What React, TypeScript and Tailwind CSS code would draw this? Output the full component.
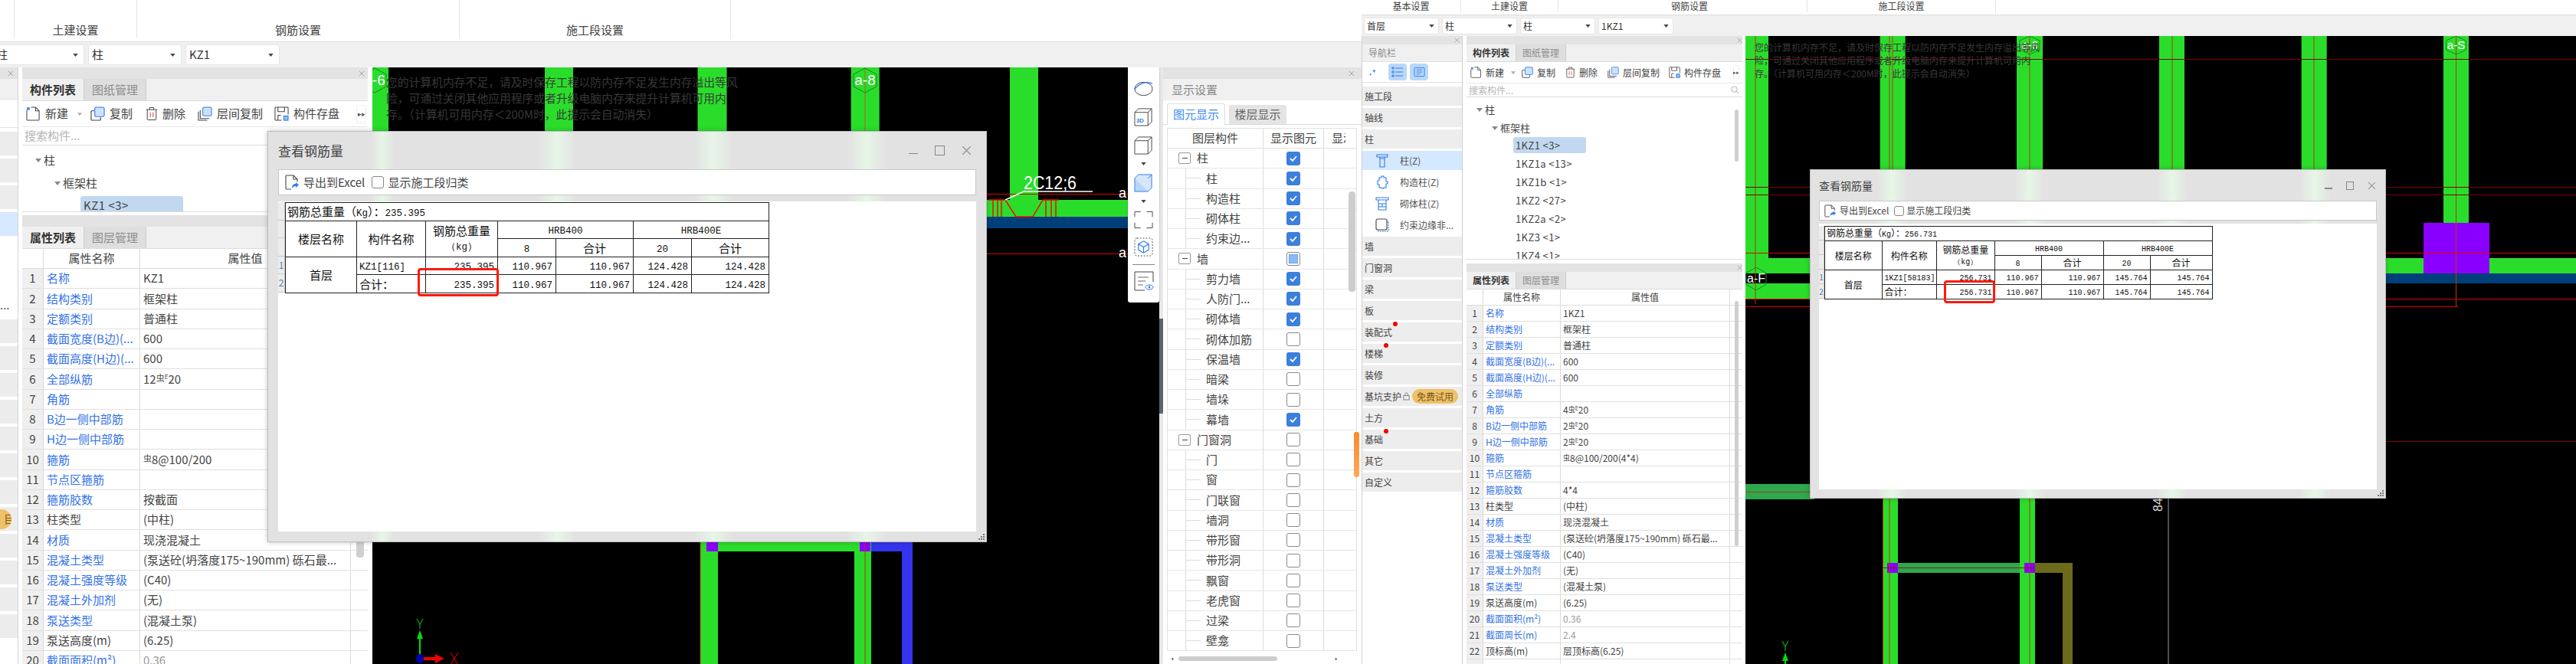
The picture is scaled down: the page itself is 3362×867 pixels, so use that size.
import type { ReactNode } from 'react';

type Row = [string, string, number?];

const cjk = "font-['Noto_Sans_CJK_SC',sans-serif]";

const leftRows: Row[] = [
  ['名称', 'KZ1', 1], ['结构类别', '框架柱', 1], ['定额类别', '普通柱', 1],
  ['截面宽度(B边)(...', '600', 1], ['截面高度(H边)(...', '600', 1], ['全部纵筋', '12§E20', 1],
  ['角筋', '', 1], ['B边一侧中部筋', '', 1], ['H边一侧中部筋', '', 1],
  ['箍筋', '§8@100/200', 1], ['节点区箍筋', '', 1], ['箍筋胶数', '按截面', 1],
  ['柱类型', '(中柱)'], ['材质', '现浇混凝土', 1], ['混凝土类型', '(泵送砼(坍落度175~190mm) 砾石最...', 1],
  ['混凝土强度等级', '(C40)', 1], ['混凝土外加剂', '(无)', 1], ['泵送类型', '(混凝土泵)', 1],
  ['泵送高度(m)', '(6.25)'], ['截面面积(m²)', '0.36', 2],
];

const rightRows: Row[] = [
  ['名称', '1KZ1', 1], ['结构类别', '框架柱', 1], ['定额类别', '普通柱', 1],
  ['截面宽度(B边)(...', '600', 1], ['截面高度(H边)(...', '600', 1], ['全部纵筋', '', 1],
  ['角筋', '4§E20', 1], ['B边一侧中部筋', '2§E20', 1], ['H边一侧中部筋', '2§E20', 1],
  ['箍筋', '§8@100/200(4*4)', 1], ['节点区箍筋', '', 1], ['箍筋胶数', '4*4', 1],
  ['柱类型', '(中柱)'], ['材质', '现浇混凝土', 1], ['混凝土类型', '(泵送砼(坍落度175~190mm) 砾石最...', 1],
  ['混凝土强度等级', '(C40)', 1], ['混凝土外加剂', '(无)', 1], ['泵送类型', '(混凝土泵)', 1],
  ['泵送高度(m)', '(6.25)'], ['截面面积(m²)', '0.36', 2], ['截面周长(m)', '2.4', 2],
  ['顶标高(m)', '层顶标高(6.25)'], ['', ''],
];

const layerGroups: { name: string; items: [string, boolean][]; state: 'on' | 'mixed' | 'off' }[] = [
  { name: '柱', state: 'on', items: [['柱', true], ['构造柱', true], ['砌体柱', true], ['约束边...', true]] },
  { name: '墙', state: 'mixed', items: [['剪力墙', true], ['人防门...', true], ['砌体墙', true], ['砌体加筋', false], ['保温墙', true], ['暗梁', false], ['墙垛', false], ['幕墙', true]] },
  { name: '门窗洞', state: 'off', items: [['门', false], ['窗', false], ['门联窗', false], ['墙洞', false], ['带形窗', false], ['带形洞', false], ['飘窗', false], ['老虎窗', false], ['过梁', false], ['壁龛', false]] },
];

function Close({ className }: { className: string }) {
  return (
    <svg viewBox="0 0 10 10" className={className} fill="none" stroke="#9a9a9a" strokeWidth="1.1">
      <path d="M1 1l8 8M9 1l-8 8" />
    </svg>
  );
}

function Caret({ className = 'w-[8px] h-[5px]', color = '#666' }: { className?: string; color?: string }) {
  return (
    <svg viewBox="0 0 8 5" className={`shrink-0 ${className}`}>
      <path d="M0 0h8L4 5z" fill={color} />
    </svg>
  );
}

function Combo({ text, className }: { text: string; className: string }) {
  return (
    <div className={`flex items-center justify-between bg-white rounded-[3px] border border-[#e6e6e6] text-[#333] ${className}`}>
      <span className="overflow-hidden whitespace-nowrap">{text}</span>
      <Caret className="w-[7px] h-[4px] mr-[1px]" color="#444" />
    </div>
  );
}

function NewIcon({ className }: { className: string }) {
  return (
    <svg viewBox="0 0 20 20" className={`shrink-0 ${className}`} fill="none" stroke="#444" strokeWidth="1.1">
      <path d="M1 5v13a1 1 0 001 1h15a1 1 0 001-1V6l-5-5H7" />
      <path d="M13 1v5h5" />
      <path d="M1 1h4v4H1z" fill="#4a8ff0" stroke="none" />
    </svg>
  );
}

function CopyIcon({ className }: { className: string }) {
  return (
    <svg viewBox="0 0 20 20" className={`shrink-0 ${className}`} fill="none" strokeWidth="1.2">
      <path d="M5 6H2a1 1 0 00-1 1v11a1 1 0 001 1h11a1 1 0 001-1v-3" stroke="#444" />
      <rect x="6" y="1" width="13" height="13" rx="2" fill="#cfe2fb" stroke="#2f7de8" />
    </svg>
  );
}

function TrashIcon({ className }: { className: string }) {
  return (
    <svg viewBox="0 0 18 20" className={`shrink-0 ${className}`} fill="none" stroke="#444" strokeWidth="1.1">
      <path d="M1 4h16M6 4V1h6v3M2.5 4v14a1 1 0 001 1h11a1 1 0 001-1V4" />
      <path d="M7 8v7M11 8v7" stroke="#e04040" />
    </svg>
  );
}

function LayerCopyIcon({ className }: { className: string }) {
  return (
    <svg viewBox="0 0 20 20" className={`shrink-0 ${className}`} fill="none" strokeWidth="1.1">
      <path d="M1 7v12h12M3.5 5v11.5H16" stroke="#444" />
      <rect x="7" y="1" width="12" height="12" rx="2" fill="#cfe2fb" stroke="#2f7de8" />
    </svg>
  );
}

function SaveIcon({ className }: { className: string }) {
  return (
    <svg viewBox="0 0 20 20" className={`shrink-0 ${className}`} fill="none" stroke="#444" strokeWidth="1.1">
      <path d="M10 19H2a1 1 0 01-1-1V2a1 1 0 011-1h16a1 1 0 011 1v9" />
      <path d="M5 1v6h9V1M5 19v-7h4" />
      <rect x="13" y="13" width="6" height="6" fill="#8bbcf5" stroke="#2f7de8" />
    </svg>
  );
}

function ExportIcon({ className }: { className: string }) {
  return (
    <svg viewBox="0 0 18 20" className={`shrink-0 ${className}`} fill="none" strokeWidth="1.1">
      <path d="M8 19H2a1 1 0 01-1-1V2a1 1 0 011-1h9l5 5v3" stroke="#444" />
      <path d="M11 1v5h5" stroke="#444" />
      <path d="M9 18c0-4 2-6 5-6v-2l4 3.5-4 3.5v-2c-2 0-4 1-5 3z" fill="#2f7de8" />
    </svg>
  );
}

function Val({ text, big }: { text: string; big: boolean }) {
  if (!text.includes('§')) return <>{text}</>;
  const [a, b] = text.split('§');
  const hasE = b.startsWith('E');
  return (
    <>
      {a}
      <span className={`relative ${big ? 'text-[11px] -top-[3px]' : 'text-[9px] -top-[2px]'}`}>虫</span>
      {hasE && <span className={`relative ${big ? 'text-[8px] -top-[6px]' : 'text-[7px] -top-[4px]'}`}>E</span>}
      {hasE ? b.slice(1) : b}
    </>
  );
}

function PanelStrip({ big }: { big: boolean }) {
  return (
    <div className={`flex items-center justify-end shrink-0 bg-[#e3e3e3] ${big ? 'h-[15px] pr-[4px]' : 'h-[11px] pr-0'}`}>
      <Close className={big ? 'w-[8px] h-[8px]' : 'w-[7px] h-[7px]'} />
    </div>
  );
}

function TabRow({ big, a, b }: { big: boolean; a: string; b: string }) {
  const tab = big ? 'w-[81px] h-[28px] text-[15px]' : 'w-[65px] h-[22px] text-[12px]';
  return (
    <div className="flex shrink-0 bg-[#f0f0f0] border-b border-[#dcdcdc]">
      <div className={`${tab} flex items-center justify-center font-bold text-[#333] border-r border-[#d0d0d0]`}>{a}</div>
      <div className={`${tab} flex items-center justify-center bg-[#dedede] text-[#8d8d8d] border-r border-[#cfcfcf]`}>{b}</div>
    </div>
  );
}

function ToolButtons({ big }: { big: boolean }) {
  const icon = big ? 'w-[19px] h-[19px]' : 'w-[15px] h-[15px]';
  const gap = big ? 'gap-[6px]' : 'gap-[5px]';
  return (
    <div className={`flex items-center shrink-0 bg-white text-[#444] border-b border-[#e8e8e8] ${big ? 'h-[34px] pl-[5px] text-[15px]' : 'h-[28px] pl-[5px] text-[12px]'}`}>
      <div className={`flex items-center ${gap} ${big ? 'w-[84px]' : 'w-[67px]'}`}>
        <NewIcon className={icon} />
        <span>新建</span>
        <span className={big ? 'ml-[6px]' : 'ml-[4px]'}><Caret className="w-[6px] h-[4px]" color="#aaa" /></span>
      </div>
      <div className={`flex items-center ${gap} ${big ? 'w-[72px]' : 'w-[57px]'}`}>
        <CopyIcon className={icon} />
        <span>复制</span>
      </div>
      <div className={`flex items-center ${gap} ${big ? 'w-[68px]' : 'w-[55px]'}`}>
        <TrashIcon className={big ? 'w-[16px] h-[19px]' : 'w-[13px] h-[15px]'} />
        <span>删除</span>
      </div>
      <div className={`flex items-center ${gap} ${big ? 'w-[100px]' : 'w-[80px]'}`}>
        <LayerCopyIcon className={icon} />
        <span>层间复制</span>
      </div>
      <div className={`flex items-center ${gap} ${big ? 'w-[107px]' : 'w-[84px]'}`}>
        <SaveIcon className={icon} />
        <span>构件存盘</span>
      </div>
      <div className={`flex items-center justify-center rounded-[3px] border border-[#eee] text-[#555] ${big ? 'w-[13px] h-[24px] text-[9px]' : 'w-[8px] h-[20px] text-[7px]'}`}>▸▸</div>
    </div>
  );
}

function PropTable({ big, rows }: { big: boolean; rows: Row[] }) {
  const h = big ? 'h-[26.25px]' : 'h-[21px]';
  const c1 = big ? 'w-[28px]' : 'w-[22px]';
  const c2 = big ? 'w-[126px]' : 'w-[101px]';
  const c3 = big ? 'w-[275px]' : 'w-[221px]';
  return (
    <div className={big ? 'text-[15px]' : 'text-[12px]'}>
      <div className={`flex bg-white border-b border-[#dcdcdc] text-[#444] ${big ? 'h-[26px]' : 'h-[21px]'}`}>
        <div className={`${c1} border-r border-[#dcdcdc]`} />
        <div className={`${c2} flex items-center justify-center border-r border-[#dcdcdc]`}>属性名称</div>
        <div className={`${c3} flex items-center justify-center border-r border-[#dcdcdc]`}>属性值</div>
      </div>
      {rows.map((r, i) => (
        <div key={i} className={`flex border-b border-[#e0e0e0] ${h}`}>
          <div className={`${c1} shrink-0 flex items-center justify-center bg-[#efefef] border-r border-[#d8d8d8] text-[#444]`}>{i + 1}</div>
          <div className={`${c2} shrink-0 flex items-center border-r border-[#dcdcdc] whitespace-nowrap overflow-hidden ${big ? 'pl-[4px]' : 'pl-[3px]'} ${r[2] ? 'text-[#3372e6]' : 'text-[#444]'}`}>{r[0]}</div>
          <div className={`${c3} shrink-0 flex items-center border-r border-[#dcdcdc] whitespace-nowrap overflow-hidden ${big ? 'pl-[4px]' : 'pl-[3px]'} ${r[2] === 2 ? 'text-[#9a9a9a]' : 'text-[#444]'}`}>
            <span><Val text={r[1]} big={big} /></span>
          </div>
        </div>
      ))}
    </div>
  );
}

function ComponentPanel({ big, items, rows }: { big: boolean; items: string[]; rows: Row[] }) {
  return (
    <div className={`flex flex-col shrink-0 overflow-hidden bg-white ${big ? 'w-[451px]' : 'w-[360px]'}`}>
      <PanelStrip big={big} />
      <TabRow big={big} a="构件列表" b="图纸管理" />
      <ToolButtons big={big} />
      <div className={`flex items-center justify-between shrink-0 bg-white text-[#b5b5b5] border-b border-[#dcdcdc] pl-[3px] ${big ? 'h-[24px] text-[15px]' : 'h-[18px] text-[12px]'}`}>
        <span>搜索构件...</span>
        {!big && (
          <svg viewBox="0 0 12 12" className="w-[11px] h-[11px] mr-[4px]" fill="none" stroke="#aaa"><circle cx="5" cy="5" r="4" /><path d="M8 8l3 3" /></svg>
        )}
      </div>
      <div className={`relative shrink-0 bg-white overflow-hidden border-b border-[#dcdcdc] ${big ? 'h-[87px] pt-[4px] text-[15px]' : 'h-[212px] pt-[4px] text-[13px]'} text-[#444]`}>
        <div className={`flex items-center gap-[3px] ${big ? 'h-[30px] pl-[17px]' : 'h-[24px] pl-[13px]'}`}>
          <Caret color="#888" />柱
        </div>
        <div className={`flex items-center gap-[3px] ${big ? 'h-[30px] pl-[42px]' : 'h-[24px] pl-[33px]'}`}>
          <Caret color="#888" />框架柱
        </div>
        {items.map((t, i) => (
          <div key={t} className={`flex items-center ${big ? 'h-[24px] ml-[76px] mt-[2px] w-[134px] pl-[4px] tracking-[0.5px]' : 'h-[21px] mb-[3px] ml-[61px] pl-[3px] w-[95px] tracking-[0.4px]'} ${i === 0 ? 'bg-[#c1d8f0] rounded-[3px]' : ''}`}>
            {t}
          </div>
        ))}
        {!big && <div className="absolute right-[5px] top-[16px] w-[5px] h-[68px] rounded-[3px] bg-[#cfcfcf]" />}
      </div>
      <div className={`shrink-0 ${big ? 'h-[4px]' : 'h-[5px]'}`} />
      <PanelStrip big={big} />
      <TabRow big={big} a="属性列表" b="图层管理" />
      <div className="relative flex-1 min-h-0 overflow-hidden">
        <PropTable big={big} rows={rows} />
        <div className={`absolute rounded-[4px] bg-[#cfcfcf] ${big ? 'right-[5px] top-[18px] w-[10px] h-[385px]' : 'right-[5px] top-[15px] w-[5px] h-[320px]'}`} />
      </div>
    </div>
  );
}

function NavIcon({ kind }: { kind: number }) {
  const common = { className: 'w-[18px] h-[18px]', fill: 'none', stroke: '#2f7de8', strokeWidth: 1.1, viewBox: '0 0 18 18' };
  if (kind === 0) return <svg {...common}><path d="M2 1h14v3H2zM5 4l1 2h6l1-2M6 6v11h6V6" /></svg>;
  if (kind === 1) return <svg {...common}><path d="M5 3h3V1h3v2h3v5h2v3h-2v5h-3v1H8v-1H5v-4H3V7h2z" /></svg>;
  if (kind === 2) return <svg {...common}><path d="M1 1h16v3H1zM4 4v13h10V4M4 9h10M4 13h10M9 9v4" /></svg>;
  return <svg {...common}><rect x="1" y="1" width="14" height="14" rx="2" stroke="#444" /><path d="M15 4h2v13H4v-2" strokeDasharray="2 1" /></svg>;
}

function RightNav() {
  const top = ['施工段', '轴线', '柱'];
  const sub = ['柱(Z)', '构造柱(Z)', '砌体柱(Z)', '约束边缘非...'];
  const bottom: [string, boolean][] = [['墙', false], ['门窗洞', false], ['梁', false], ['板', false], ['装配式', true], ['楼梯', true], ['装修', false]];
  const last: [string, boolean][] = [['土方', false], ['基础', true], ['其它', false], ['自定义', false]];
  const Band = ({ t, dot }: { t: string; dot?: boolean }) => (
    <div className="relative flex items-center shrink-0 h-[25px] mb-[3px] pl-[3px] bg-[#ededed] text-[12px] text-[#444]">
      {t}
      {dot && <span className={`absolute top-[-1px] w-[6px] h-[6px] rounded-full bg-[#f00000] ${t.length > 2 ? 'left-[40px]' : 'left-[28px]'}`} />}
    </div>
  );
  return (
    <div className="flex flex-col w-[132px] shrink-0 bg-white border-l border-[#cfcfcf] border-r">
      <div className="flex items-center justify-end shrink-0 h-[11px] bg-[#e3e3e3] pr-[3px]"><Close className="w-[7px] h-[7px]" /></div>
      <div className="flex items-center shrink-0 h-[23px] pl-[8px] text-[12px] text-[#8a8a8a] bg-[#f0f0f0] border-b border-[#e2e2e2]">导航栏</div>
      <div className="flex items-center shrink-0 h-[27px] gap-[4px] pl-[8px] border-b border-[#e2e2e2]">
        <svg viewBox="0 0 12 12" className="w-[11px] h-[11px] mr-[11px]" fill="#2f7de8"><path d="M8 1l.7 2.3L11 4l-2.3.7L8 7l-.7-2.3L5 4l2.3-.7zM3 7l.5 1.5L5 9l-1.5.5L3 11l-.5-1.5L1 9l1.5-.5z" /></svg>
        <div className="flex items-center justify-center w-[24px] h-[22px] rounded-[4px] bg-[#b9d8f8]">
          <svg viewBox="0 0 16 14" className="w-[16px] h-[14px]" fill="none" stroke="#2f7de8"><path d="M5 2h10M5 7h10M5 12h10" /><rect x="1" y="1" width="2" height="2" /><rect x="1" y="6" width="2" height="2" /><rect x="1" y="11" width="2" height="2" /></svg>
        </div>
        <div className="flex items-center justify-center w-[24px] h-[22px] rounded-[4px] bg-[#b9d8f8]">
          <svg viewBox="0 0 16 14" className="w-[15px] h-[14px]" fill="none" stroke="#2f7de8"><rect x="1" y="1" width="14" height="12" rx="1" /><path d="M4 4h8M4 7h8M4 10h5" /></svg>
        </div>
      </div>
      <div className="shrink-0 h-[5px]" />
      {top.map(t => <Band key={t} t={t} />)}
      {sub.map((t, i) => (
        <div key={t} className={`flex items-center shrink-0 h-[25px] mb-[3px] pl-[17px] gap-[14px] text-[12px] text-[#555] ${i === 0 ? 'bg-[#d4e8ff]' : ''}`}>
          <NavIcon kind={i} />
          <span className="whitespace-nowrap">{t}</span>
        </div>
      ))}
      {bottom.map(([t, d]) => <Band key={t} t={t} dot={d} />)}
      <div className="flex items-center shrink-0 h-[25px] mb-[3px] pl-[3px] bg-[#ededed] text-[12px] text-[#444]">
        基坑支护
        <svg viewBox="0 0 10 12" className="w-[9px] h-[11px] ml-[2px]" fill="none" stroke="#777"><rect x="1" y="5" width="8" height="6" /><path d="M3 5V3a2 2 0 014 0v2" /></svg>
        <span className="ml-[3px] flex items-center justify-center w-[60px] h-[19px] rounded-full bg-[#eec168] text-[#7a5a20]">免费试用</span>
      </div>
      {last.map(([t, d]) => <Band key={t} t={t} dot={d} />)}
    </div>
  );
}

function LeftNavStub() {
  const before = 3;
  return (
    <div className="w-[23px] shrink-0 bg-white overflow-hidden">
      <div className="flex items-center justify-end h-[15px] bg-[#e3e3e3] pr-[5px]"><Close className="w-[8px] h-[8px]" /></div>
      <div className="h-[27px] bg-[#f0f0f0] border-b border-[#e2e2e2]" />
      <div className="h-[37px] border-b border-[#e2e2e2]" />
      <div className="h-[5px]" />
      {Array.from({ length: before }, (_, i) => <div key={i} className="h-[31px] mb-[4px] bg-[#ececec]" />)}
      <div className="h-[31px] mb-[4px] bg-[#d6e9ff]" />
      <div className="h-[70px]" />
      <div className="flex items-center h-[31px] mb-[4px] text-[15px] leading-none text-[#555]">...</div>
      {Array.from({ length: 12 }, (_, i) => (
        <div key={i} className="flex items-center h-[31px] mb-[4px] bg-[#ececec]">
          {i === 7 && (
            <span className="flex items-center justify-end shrink-0 w-[15px] h-[26px] rounded-r-full bg-[#eec168] text-[14px] text-[#7a5a20] overflow-hidden">
              <span className="-mr-[4px]">目</span>
            </span>
          )}
        </div>
      ))}
    </div>
  );
}

function DisplayCheck({ state }: { state: 'on' | 'mixed' | 'off' }) {
  if (state === 'on') {
    return (
      <div className="flex items-center justify-center w-[18px] h-[18px] rounded-[3px] bg-[#3c7fdc]">
        <svg viewBox="0 0 12 12" className="w-[12px] h-[12px]" fill="none" stroke="#fff" strokeWidth="1.8"><path d="M2 6l3 3 5-6" /></svg>
      </div>
    );
  }
  if (state === 'mixed') {
    return (
      <div className="flex items-center justify-center w-[18px] h-[18px] rounded-[3px] border border-[#888]">
        <div className="w-[12px] h-[12px] bg-[#8ab9f5] border border-[#6da4ee]" />
      </div>
    );
  }
  return <div className="w-[18px] h-[18px] rounded-[3px] border border-[#8a8a8a] bg-white" />;
}

function DisplayPanel() {
  return (
    <div className="relative flex flex-col w-[259px] shrink-0 bg-white overflow-hidden">
      <div className="flex items-center justify-end shrink-0 h-[15px] bg-[#e3e3e3] pr-[9px]"><Close className="w-[8px] h-[8px]" /></div>
      <div className="flex items-center shrink-0 h-[28px] pl-[11px] text-[15px] text-[#8a8a8a] bg-[#f0f0f0]">显示设置</div>
      <div className="flex items-end shrink-0 h-[32px] pl-[5px] gap-[5px] bg-white border-b border-[#dcdcdc]">
        <div className="flex items-center justify-center w-[76px] h-[28px] -mb-[1px] rounded-t-[3px] border border-b-0 border-[#dcdcdc] bg-white text-[15px] text-[#3b8cf0]">图元显示</div>
        <div className="flex items-center justify-center w-[75px] h-[25px] rounded-t-[3px] bg-[#e4e4e4] text-[15px] text-[#666]">楼层显示</div>
      </div>
      <div className="shrink-0 ml-[5px] mt-[4px] w-[248px] border-l border-r border-t border-[#e0e0e0]">
        <div className="flex h-[26px] border-b border-[#e0e0e0] text-[15px] text-[#444]">
          <div className="flex items-center justify-center w-[125px] border-r border-[#dcdcdc]">图层构件</div>
          <div className="flex items-center justify-center w-[79px] border-r border-[#dcdcdc]">显示图元</div>
          <div className="flex items-center w-[28px] pl-[10px] overflow-hidden whitespace-nowrap">显示</div>
        </div>
        {layerGroups.map(g => (
          <div key={g.name}>
            <LayerRow text={g.name} state={g.state} parent />
            {g.items.map(([t, on], i) => (
              <LayerRow key={t + i} text={t} state={on ? 'on' : 'off'} />
            ))}
          </div>
        ))}
      </div>
      <div className="absolute left-[242px] top-[162px] w-[9px] h-[131px] rounded-[4px] bg-[#cdcdcd]" />
      <div className="absolute left-[249px] top-[476px] w-[7px] h-[59px] rounded-[3px] bg-linear-to-b from-[#f78a2c] to-[#ffa95c]" />
      <div className="mt-auto flex items-center shrink-0 h-[12px] mb-[1px] pl-[10px] text-[#666]">
        <Caret className="w-[4px] h-[7px] rotate-90" color="#555" />
        <div className="w-[129px] h-[6px] ml-[6px] rounded-[3px] bg-[#cdcdcd]" />
        <Caret className="w-[4px] h-[7px] ml-[75px] -rotate-90" color="#555" />
      </div>
    </div>
  );
}

function LayerRow({ text, state, parent }: { text: string; state: 'on' | 'mixed' | 'off'; parent?: boolean }) {
  return (
    <div className="flex h-[26.25px] border-b border-[#e6e6e6] text-[15px] text-[#444]">
      <div className="relative flex items-center w-[125px] border-r border-[#dcdcdc]">
        {parent ? (
          <>
            <div className="flex items-center justify-center ml-[14px] w-[16px] h-[15px] rounded-[2px] border border-[#999] text-[13px] leading-none">
              <div className="w-[7px] h-[1px] bg-[#444]" />
            </div>
            <span className="ml-[8px]">{text}</span>
          </>
        ) : (
          <>
            <div className="absolute left-[23px] top-0 bottom-0 w-[1px] bg-[#dddddd]" />
            <div className="ml-[23px] w-[20px] h-[1px] bg-[#dddddd]" />
            <span className="ml-[7px] whitespace-nowrap">{text}</span>
          </>
        )}
      </div>
      <div className="flex items-center justify-center w-[79px] border-r border-[#dcdcdc]">
        <DisplayCheck state={state} />
      </div>
    </div>
  );
}

function ViewToolbar() {
  const s = 'fill-none stroke-[#444]';
  return (
    <div className="absolute left-[986px] top-0 flex flex-col items-center w-[41px] h-[307px] pt-[16px] bg-white rounded-b-[3px] shadow-[0_0_2px_rgba(0,0,0,0.4)]">
      <svg viewBox="0 0 28 24" className="shrink-0 w-[27px] h-[24px]"><ellipse cx="14" cy="12" rx="12" ry="9" className={s} /><path d="M2 13c4-8 16-12 24-8" fill="none" stroke="#2f7de8" strokeWidth="1.4" /></svg>
      <svg viewBox="0 0 26 26" className="shrink-0 w-[25px] h-[25px] mt-[12px]"><path d="M1 7h18v18H1zM1 7l5-5h18v18l-5 5M19 7l5-5" className={s} /><text x="3" y="21" fontSize="8" fontWeight="700" fill="#2f7de8" fontFamily="Liberation Sans">3D</text></svg>
      <svg viewBox="0 0 26 26" className="shrink-0 w-[25px] h-[25px] mt-[12px]"><path d="M1 7h18v18H1zM1 7l5-5h18v18l-5 5M19 7l5-5" className={s} /></svg>
      <Caret className="w-[7px] h-[4px] mt-[10px]" color="#444" />
      <svg viewBox="0 0 26 26" className="shrink-0 w-[25px] h-[25px] mt-[10px]"><path d="M1 7h18v18H1z" fill="#b9d6f8" stroke="#2f7de8" /><path d="M1 7l5-5h18v18l-5 5M19 7l5-5" fill="#d6e6fb" stroke="#2f7de8" /></svg>
      <Caret className="w-[7px] h-[4px] mt-[10px]" color="#444" />
      <svg viewBox="0 0 26 24" className="shrink-0 w-[25px] h-[24px] mt-[10px]"><path d="M1 8V1h8M17 1h8v7M25 16v7h-8M9 23H1v-7" className={s} /></svg>
      <svg viewBox="0 0 26 26" className="shrink-0 w-[25px] h-[25px] mt-[11px]"><rect x="1" y="1" width="24" height="24" rx="3" className={s} strokeDasharray="2 2" /><path d="M13 5l7 4v8l-7 4-7-4V9zM6 9l7 4 7-4M13 13v8" fill="none" stroke="#2f7de8" strokeWidth="1.2" /></svg>
      <div className="shrink-0 w-[29px] h-[1px] mt-[10px] bg-[#888]" />
      <svg viewBox="0 0 26 26" className="shrink-0 w-[26px] h-[26px] mt-[8px]"><path d="M25 14V1H1v24h13" className={s} /><path d="M5 8h14M5 13h10M5 18h7" fill="none" stroke="#666" /><ellipse cx="20" cy="21" rx="5" ry="3" fill="none" stroke="#2f7de8" /><circle cx="20" cy="21" r="1.4" fill="#2f7de8" /></svg>
    </div>
  );
}

function Hex({ x, y, r, ry, label, size }: { x: number; y: number; r: number; ry: number; label: string; size: number }) {
  const pts = `${x},${y - ry} ${x + r},${y - ry / 2} ${x + r},${y + ry / 2} ${x},${y + ry} ${x - r},${y + ry / 2} ${x - r},${y - ry / 2}`;
  return (
    <g>
      <polygon points={pts} fill="none" stroke="#0f8a2a" strokeWidth="1" />
      <text x={x} y={y + size / 3} textAnchor="middle" fontSize={size} fill="#fff" fontFamily="Liberation Sans">{label}</text>
    </g>
  );
}

function Axis({ x, y }: { x: number; y: number }) {
  return (
    <g transform={`translate(${x} ${y})`}>
      <path d="M0 0V-27" stroke="#00e000" strokeWidth="2" />
      <path d="M-4-26L0-37l4 11z" fill="#00e000" />
      <path d="M-4-52L0-45l4-7M0-45v6" stroke="#00e000" fill="none" />
      <path d="M4 0h18" stroke="#f00000" strokeWidth="4" />
      <path d="M20-6l12 6-12 6z" fill="#f00000" />
      <path d="M40-8l10 16M50-8L40 8" stroke="#f00000" fill="none" />
      <ellipse cx="0" cy="0" rx="5" ry="6" fill="#0000b0" />
    </g>
  );
}

function LeftCad() {
  const G = '#2bdd2b';
  return (
    <svg viewBox="486 88 1027 779" className="block w-full h-full">
      <rect x="486" y="88" width="1027" height="779" fill="#000" />
      {[[486, 21], [711, 37], [910.5, 38], [1110.7, 37], [1318, 37]].map(([x, w]) => (
        <rect key={x} x={x} y="88" width={w} height="173" fill={G} />
      ))}
      <rect x="1288" y="261" width="225" height="22" fill={G} />
      <rect x="1288" y="283" width="225" height="15" fill="#00407a" />
      <path d="M1129 88v90" stroke="#b5651d" />
      <path d="M1288 253.5h225M1288 331.5h225" stroke="#e00000" />
      <g stroke="#ff0000" strokeWidth="1.4" fill="none">
        <path d="M1290 261h22l14 22h22l13-22h21" />
        <path d="M1296 261v22M1302 261v22M1307 261v22M1365 261v22M1372 261v22M1378 261v22" />
      </g>
      <path d="M1312 261l24-11h90" stroke="#fff" strokeWidth="1.5" fill="none" />
      <text x="1336" y="247" fontSize="24" fill="#fff" textLength="69" lengthAdjust="spacingAndGlyphs" fontFamily="Liberation Sans">2C12;6</text>
      <Hex x={1129} y={105} r={15} ry={16} label="a-8" size={19} />
      <Hex x={489} y={105} r={15} ry={16} label="a-6" size={19} />
      <text x="1460" y="258" fontSize="18" fill="#fff" fontFamily="Liberation Sans">a</text>
      <text x="1460" y="336" fontSize="18" fill="#fff" fontFamily="Liberation Sans">a</text>
      <rect x="914" y="700" width="23" height="167" fill={G} />
      <rect x="1115" y="700" width="22" height="167" fill={G} />
      <rect x="914" y="700" width="223" height="20" fill={G} />
      <rect x="1137" y="700" width="54" height="20" fill="#3434ee" />
      <rect x="1177" y="700" width="14" height="167" fill="#3434ee" />
      <rect x="922" y="700" width="15" height="20" fill="#8a00ff" />
      <rect x="1122" y="700" width="14" height="20" fill="#8a00ff" />
      <path d="M914 700v167M1129 700v167" stroke="#c03010" />
      <Axis x={548} y={860} />
    </svg>
  );
}

function RightCad() {
  const G = '#2bdd2b';
  const D = '#2ea84f';
  const dark = '#7a0000';
  return (
    <svg viewBox="2278 47 1084 820" className="block w-full h-full">
      <rect x="2278" y="47" width="1084" height="820" fill="#000" />
      {[[2278, 30, 290], [2453.7, 33, 200], [2632, 34, 200], [2818, 33, 200], [3003.7, 33, 200], [3189, 33, 244]].map(([x, w, h]) => (
        <rect key={x} x={x} y="47" width={w} height={h} fill={G} />
      ))}
      <rect x="2278" y="337" width="1084" height="20" fill={G} />
      <rect x="2278" y="370" width="90" height="20" fill={G} />
      <rect x="3110" y="357" width="252" height="13" fill="#00407a" />
      <rect x="3163" y="291" width="86" height="66" fill="#8a00ff" />
      <path d="M2291 47v350M2466 47v180M2470 47v180M2649 47v180M2835 47v180M3020 47v180M3205.5 47v353" stroke="#b03a10" />
      <path d="M2278 77.5h1084M2278 244.5h1084M2278 254.5h1084" stroke={dark} />
      <path d="M2278 330.5h1084M2278 390.5h1084M2278 400.5h930" stroke="#e00000" />
      <path d="M3100 576.5h262" stroke={dark} />
      <Hex x={2649} y={59} r={13} ry={12} label="a-6" size={15} />
      <Hex x={2292} y={364} r={13} ry={15} label="a-F" size={16} />
      <Hex x={3205.5} y={59} r={13} ry={12} label="a-S" size={15} />
      <rect x="2278" y="632" width="90" height="20" fill={D} />
      <path d="M2278 642.5h90" stroke="#b03a10" />
      <rect x="2457.5" y="640" width="19.5" height="227" fill={G} />
      <rect x="2636" y="640" width="20" height="227" fill={G} />
      <rect x="2477" y="735" width="159" height="13" fill={D} />
      <rect x="2656" y="735" width="49" height="13" fill="#6b6b1a" />
      <rect x="2692" y="735" width="13" height="132" fill="#6b6b1a" />
      <rect x="2463" y="735" width="14" height="13" fill="#8a00ff" />
      <rect x="2642" y="735" width="14" height="13" fill="#8a00ff" />
      <path d="M2457.5 640v227M2466 640v227M2649 640v227" stroke="#c03010" />
      <path d="M2457.5 741.5h198.5" stroke="#8a1a10" />
      <path d="M2830 640v227" stroke="#6a6a6a" strokeWidth="1.5" />
      <text transform="translate(2822 668) rotate(-90)" fontSize="16" fill="#ddd" fontFamily="Liberation Sans">84</text>
      <Axis x={2330} y={889} />
    </svg>
  );
}

function Warning({ big, lines }: { big: boolean; lines: string[] }) {
  return (
    <div className={`absolute text-[#383838] whitespace-nowrap ${big ? 'left-[18px] top-[8px] text-[14.8px] leading-[21px]' : 'left-[12px] top-[6px] text-[12px] leading-[17px]'}`}>
      {lines.map(l => <div key={l}>{l}</div>)}
    </div>
  );
}

const warnLines = [
  '您的计算机内存不足，请及时保存工程以防内存不足发生内存溢出等风',
  '险，可通过关闭其他应用程序或者升级电脑内存来提升计算机可用内',
  '存。（计算机可用内存＜200M时，此提示会自动消失）',
];

function WinButtons({ big }: { big: boolean }) {
  return (
    <div className={`flex items-center ${big ? 'gap-[22px] pr-[3px]' : 'gap-[18px]'}`}>
      <div className={`self-end bg-[#888] h-[1.5px] ${big ? 'w-[12px] mb-[2px]' : 'w-[10px] mb-[1px]'}`} />
      <div className={`border-[1.5px] border-[#888] ${big ? 'w-[13px] h-[13px]' : 'w-[10px] h-[11px]'}`} />
      <Close className={big ? 'w-[13px] h-[13px]' : 'w-[11px] h-[11px]'} />
    </div>
  );
}

function Blob({ className }: { className: string }) {
  return <div className={`absolute top-0 bottom-0 bg-linear-to-r from-transparent via-[#e7f6e7] to-transparent ${className}`} />;
}

function Num({ big, children }: { big: boolean; children: ReactNode }) {
  return <span className={`font-['Liberation_Mono',monospace] ${big ? 'text-[12.5px]' : 'text-[10px]'}`}>{children}</span>;
}

function SteelTable({ big, total, name, a, b, c }: { big: boolean; total: string; name: string; a: string; b: string; c: string }) {
  const h = big ? 'h-[23.5px]' : 'h-[19px]';
  const td = 'border border-[#222] p-0 leading-none overflow-hidden whitespace-nowrap';
  const rhead = 'border-b border-r border-[#c8c8c8] bg-[#ececec] flex items-center justify-center text-[#5a7fa8]';
  const colW = big
    ? ['w-[93px]', 'w-[90px]', 'w-[94px]', 'w-[76px]', 'w-[101px]', 'w-[76px]', 'w-[101px]']
    : ['w-[74.5px]', 'w-[71.5px]', 'w-[75.5px]', 'w-[61px]', 'w-[81px]', 'w-[61px]', 'w-[81px]'];
  const right = big ? 'text-right pr-[4px]' : 'text-right pr-[3px]';
  return (
    <div className={`flex items-start text-[#111] ${big ? 'text-[15px]' : 'text-[12px]'}`}>
      <div className={`flex flex-col shrink-0 ${big ? 'w-[9px] text-[12px]' : 'w-[7px] text-[10px]'}`}>
        {['', '', '', '1', '2'].map((t, i) => <div key={i} className={`${rhead} ${h}`}>{t}</div>)}
      </div>
      <table className={`table-fixed border-collapse ${big ? 'w-[631px]' : 'w-[505.5px]'}`}>
        <colgroup>{colW.map((w, i) => <col key={i} className={w} />)}</colgroup>
        <tbody>
          <tr className={h}>
            <td colSpan={7} className={`${td} pl-[2px]`}>钢筋总重量（<Num big={big}>Kg</Num>）：<Num big={big}>{total}</Num></td>
          </tr>
          <tr className={h}>
            <td rowSpan={2} className={`${td} text-center`}>楼层名称</td>
            <td rowSpan={2} className={`${td} text-center`}>构件名称</td>
            <td rowSpan={2} className={`${td} text-center`}>
              <div>钢筋总重量</div>
              <div className={big ? 'mt-[4px]' : 'mt-[2px]'}><Num big={big}>（kg）</Num></div>
            </td>
            <td colSpan={2} className={`${td} text-center`}><Num big={big}>HRB400</Num></td>
            <td colSpan={2} className={`${td} text-center`}><Num big={big}>HRB400E</Num></td>
          </tr>
          <tr className={h}>
            <td className={`${td} text-center`}><Num big={big}>8</Num></td>
            <td className={`${td} text-center`}>合计</td>
            <td className={`${td} text-center`}><Num big={big}>20</Num></td>
            <td className={`${td} text-center`}>合计</td>
          </tr>
          {[name, '合计：'].map((n, i) => (
            <tr key={n} className={h}>
              {i === 0 && <td rowSpan={2} className={`${td} text-center`}>首层</td>}
              <td className={`${td} pl-[3px]`}>{i === 0 ? <Num big={big}>{n}</Num> : n}</td>
              <td className={`${td} ${right}`}><Num big={big}>{a}</Num></td>
              <td className={`${td} ${right}`}><Num big={big}>{b}</Num></td>
              <td className={`${td} ${right}`}><Num big={big}>{b}</Num></td>
              <td className={`${td} ${right}`}><Num big={big}>{c}</Num></td>
              <td className={`${td} ${right}`}><Num big={big}>{c}</Num></td>
            </tr>
          ))}
        </tbody>
      </table>
    </div>
  );
}

function SteelDialog({ big, total, name, a, b, c, className, blobs }: { big: boolean; total: string; name: string; a: string; b: string; c: string; className: string; blobs: ReactNode }) {
  return (
    <div className={`absolute flex flex-col overflow-hidden bg-[#e2e2e2] border border-[#bdbdbd] shadow-[0_0_6px_rgba(0,0,0,0.25)] ${className}`}>
      {blobs}
      <div className={`relative flex items-center justify-between shrink-0 text-[#444] ${big ? 'h-[49px] pl-[13px] pr-[16px] text-[17px]' : 'h-[40px] pl-[11px] pr-[12px] text-[14px]'}`}>
        <span>查看钢筋量</span>
        <WinButtons big={big} />
      </div>
      <div className={`relative flex items-center shrink-0 bg-white border border-[#c8c8c8] text-[#444] ${big ? 'h-[34px] mx-[13px] pl-[8px] text-[15px]' : 'h-[26px] mx-[11px] pl-[6px] text-[12px]'}`}>
        <ExportIcon className={big ? 'w-[18px] h-[20px]' : 'w-[15px] h-[17px]'} />
        <span className={big ? 'ml-[6px]' : 'ml-[5px]'}>导出到Excel</span>
        <div className={`rounded-[3px] border border-[#888] ${big ? 'ml-[9px] w-[16px] h-[16px]' : 'ml-[7px] w-[13px] h-[13px]'}`} />
        <span className={big ? 'ml-[5px]' : 'ml-[3px]'}>显示施工段归类</span>
      </div>
      <div className={`relative flex-1 bg-white ${big ? 'mx-[13px] mt-[8px] mb-[13px] pt-[1px]' : 'mx-[11px] mt-[4px] mb-[11px] pt-[3px]'}`}>
        <SteelTable big={big} total={total} name={name} a={a} b={b} c={c} />
      </div>
      <svg viewBox="0 0 9 9" className="absolute right-[2px] bottom-[2px] w-[9px] h-[9px]" fill="#777">
        <path d="M7 1h2v2H7zM4 4h2v2H4zM7 4h2v2H7zM1 7h2v2H1zM4 7h2v2H4zM7 7h2v2H7z" />
      </svg>
    </div>
  );
}

export default function App() {
  return (
    <div className={`relative flex w-[3362px] h-[867px] overflow-hidden bg-white ${cjk}`}>
      {/* left capture */}
      <div className="flex flex-col w-[1777px] shrink-0">
        <div className="flex h-[55px] shrink-0 bg-white text-[15px] text-[#444] border-b border-[#e0e0e0]">
          <div className="w-[19px] h-[50px] border-r border-[#e4e4e4]" />
          <div className="flex items-end justify-center w-[160px] h-[50px] border-r border-[#e4e4e4]">土建设置</div>
          <div className="flex items-end justify-center w-[421px] h-[50px] border-r border-[#e4e4e4]">钢筋设置</div>
          <div className="flex items-end justify-center w-[354px] h-[50px] border-r border-[#e4e4e4]">施工段设置</div>
        </div>
        <div className="flex items-center gap-[5px] h-[33px] shrink-0 bg-[#f0f0f0] text-[15px] overflow-hidden">
          <Combo text="柱" className="w-[120px] h-[27px] -ml-[10px] pl-[4px] pr-[6px]" />
          <Combo text="柱" className="w-[122px] h-[27px] pl-[4px] pr-[6px]" />
          <Combo text="KZ1" className="w-[123px] h-[27px] pl-[4px] pr-[6px]" />
        </div>
        <div className="flex flex-1 min-h-0 overflow-hidden">
          <LeftNavStub />
          <div className="w-[6px] shrink-0 border-l border-[#d4d4d4] bg-white" />
          <ComponentPanel big items={['KZ1 <3>']} rows={leftRows} />
          <div className="w-[6px] shrink-0 bg-white" />
          <div className="relative w-[1027px] shrink-0">
            <LeftCad />
            <Warning big lines={warnLines} />
            <ViewToolbar />
          </div>
          <div className="flex items-center w-[5px] shrink-0 bg-[#e8e8e8]">
            <div className="w-full h-[124px] bg-[#5d646b]" />
          </div>
          <DisplayPanel />
        </div>
      </div>

      {/* right capture */}
      <div className="flex flex-col flex-1 min-w-0">
        <div className="flex h-[20px] shrink-0 bg-white text-[12px] text-[#444] border-b border-[#dcdcdc]">
          <div className="flex items-center justify-center w-[130px] h-[16px] border-r border-[#e4e4e4]">基本设置</div>
          <div className="flex items-center justify-center w-[127px] h-[16px] border-r border-[#e4e4e4]">土建设置</div>
          <div className="flex items-center justify-center w-[325px] h-[16px] border-r border-[#e4e4e4] pl-[18px]">钢筋设置</div>
          <div className="flex items-center justify-center w-[246px] h-[16px] border-r border-[#e4e4e4]">施工段设置</div>
        </div>
        <div className="flex items-center gap-[4px] h-[27px] shrink-0 pl-[3px] bg-[#f0f0f0] text-[12px]">
          <Combo text="首层" className="w-[98px] h-[22px] pl-[3px] pr-[4px]" />
          <Combo text="柱" className="w-[98px] h-[22px] pl-[3px] pr-[4px]" />
          <Combo text="柱" className="w-[98px] h-[22px] pl-[3px] pr-[4px]" />
          <Combo text="1KZ1" className="w-[98px] h-[22px] pl-[3px] pr-[4px]" />
        </div>
        <div className="flex flex-1 min-h-0 overflow-hidden">
          <RightNav />
          <div className="w-[5px] shrink-0 bg-white" />
          <ComponentPanel big={false} items={['1KZ1 <3>', '1KZ1a <13>', '1KZ1b <1>', '1KZ2 <27>', '1KZ2a <2>', '1KZ3 <1>', '1KZ4 <1>']} rows={rightRows} />
          <div className="w-[4px] shrink-0 bg-white" />
          <div className="relative flex-1 min-w-0">
            <RightCad />
            <Warning big={false} lines={warnLines} />
          </div>
        </div>
      </div>

      <SteelDialog
        big
        total="235.395"
        name="KZ1[116]"
        a="235.395"
        b="110.967"
        c="124.428"
        className="left-[349px] top-[171px] w-[939px] h-[537px]"
        blobs={
          <>
            <Blob className="left-[134px] w-[30px]" />
            <Blob className="left-[352px] w-[50px]" />
            <Blob className="left-[556px] w-[50px]" />
            <Blob className="left-[756px] w-[50px]" />
          </>
        }
      />
      <div className="absolute left-[545px] top-[350px] w-[106px] h-[37px] rounded-[4px] border-[3px] border-[#ff1a0a]" />

      <SteelDialog
        big={false}
        total="256.731"
        name="1KZ1[58183]"
        a="256.731"
        b="110.967"
        c="145.764"
        className="left-[2362px] top-[221px] w-[752px] h-[430px]"
        blobs={
          <>
            <Blob className="left-[86px] w-[40px]" />
            <Blob className="left-[266px] w-[40px]" />
            <Blob className="left-[452px] w-[40px]" />
            <Blob className="left-[638px] w-[40px]" />
          </>
        }
      />
      <div className="absolute left-[2537px] top-[366px] w-[67px] h-[30px] rounded-[4px] border-[3px] border-[#ff1a0a]" />
    </div>
  );
}
